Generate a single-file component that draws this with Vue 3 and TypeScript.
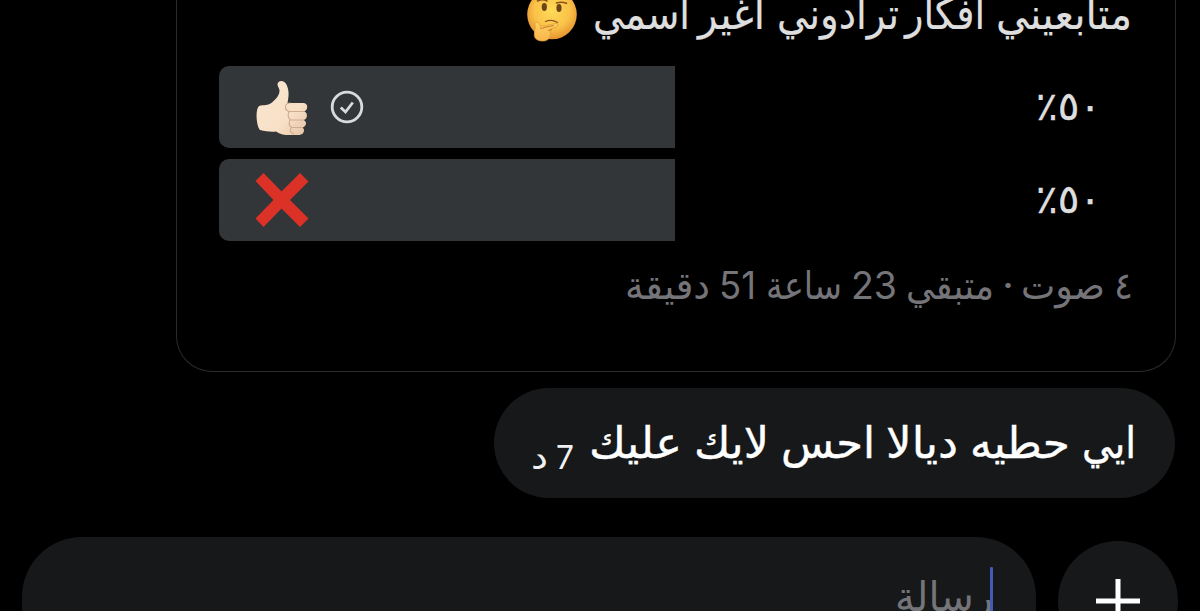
<script setup lang="ts">
interface Word { t: string; x: number; w: number; small?: boolean }

// x is the right edge of the word, w its width
const question: Word[] = [
  { t: 'متابعيني', x: 1132, w: 136 },
  { t: 'أفكار', x: 985, w: 80 },
  { t: 'ترادوني', x: 899, w: 122 },
  { t: 'أغير', x: 765, w: 67 },
  { t: 'اسمي', x: 690, w: 97 },
]
const votes: Word[] = [
  { t: '٤', x: 1133, w: 19 },
  { t: 'صوت', x: 1105, w: 84 },
  { t: '·', x: 1014, w: 12 },
  { t: 'متبقي', x: 994, w: 88 },
  { t: '23', x: 897, w: 46 },
  { t: 'ساعة', x: 842, w: 76 },
  { t: '51', x: 756, w: 37 },
  { t: 'دقيقة', x: 710, w: 85 },
]
const message: Word[] = [
  { t: 'ايي', x: 1136, w: 54 },
  { t: 'حطيه', x: 1070, w: 100 },
  { t: 'ديالا', x: 958, w: 72 },
  { t: 'احس', x: 875, w: 94 },
  { t: 'لايك', x: 769, w: 75 },
  { t: 'عليك', x: 682, w: 93 },
  { t: '7', x: 574, w: 18, small: true },
  { t: 'د', x: 548, w: 17, small: true },
]
const options = [{ id: 'yes', chosen: true }, { id: 'no', chosen: false }]
</script>

<template>
  <main class="screen" dir="rtl">
    <section class="card">
      <svg class="question" viewBox="177 0 998 66">
        <text v-for="w in question" :key="w.t" :x="w.x" y="29" :textLength="w.w" lengthAdjust="spacingAndGlyphs">{{ w.t }}</text>
        <defs>
          <radialGradient id="face" cx=".5" cy=".42" r=".6">
            <stop offset="0" stop-color="#ffdb58" /><stop offset=".6" stop-color="#fac248" /><stop offset="1" stop-color="#e38f2c" />
          </radialGradient>
          <linearGradient id="hand" x1="0" y1="0" x2="0" y2="1">
            <stop offset="0" stop-color="#ffd061" /><stop offset="1" stop-color="#f8b54c" />
          </linearGradient>
        </defs>
        <circle cx="552" cy="14.500" r="24.800" fill="url(#face)" />
        <ellipse cx="544.300" cy="7" rx="2.600" ry="3.900" fill="#6b4518" />
        <ellipse cx="559" cy="8" rx="2.600" ry="3.900" fill="#6b4518" />
        <path d="M537.500 1q5-2.500 9.500 0M556.500 3q5-1.500 10 .3" fill="none" stroke="#8a5317" stroke-width="1.600" stroke-linecap="round" />
        <path d="M545.500 21.500q6-2.500 12 1" fill="none" stroke="#8a5522" stroke-width="1.300" stroke-linecap="round" />
        <path d="M537 22c-2 0-2.500 2-1.700 5l-.8 5c-1 5 1 8.500 7 9 6 .5 9-3 9-6.500l-.3-5 6-2.500c2.500-1.500 1.500-4-.8-3.500l-10.500 2.500-4.500 0c-1-1.500-1-4-3.400-4z" fill="url(#hand)" stroke="#dd9836" stroke-width=".7" />
        <path d="M540 28q3 1 4-.5l10-2M548 30.500l4-1" stroke="#c87d26" fill="none" />
      </svg>

      <div class="poll">
        <div v-for="o in options" :key="o.id" class="row">
          <svg class="percent" viewBox="1030 66 76 82">
            <text x="1101" y="119.500" textLength="65" lengthAdjust="spacingAndGlyphs">٥٠٪</text>
          </svg>
          <div class="bar" dir="ltr">
            <svg v-if="o.chosen" class="picto" viewBox="0 0 56 58">
              <defs>
                <linearGradient id="skin" x1="0" y1="0" x2="1" y2="1">
                  <stop offset="0" stop-color="#f8e6d0" /><stop offset=".65" stop-color="#f8e0c7" /><stop offset="1" stop-color="#e4c2a2" />
                </linearGradient>
              </defs>
              <path d="M6 28C11 26.500 15 28 19 24.500c4.500-4 7.500-7.500 7.500-12 0-2-2-4-2-6 0-4.500 7-5 9.200.5 2.500 6 2.300 11 .8 18H50c5.500 0 5.500 7 1 8.500 4 1 4 7.500-.5 8.500 4 1.500 3 6.500-1 7.500 3 2 1.500 7-3 7.500H38c-8 .5-11-1-15-3.500-5 .5-10 0-16-1.500C3.500 48 2 32 6 28z" fill="url(#skin)" />
              <path d="M51.500 33.500H36.500q-4.500-1-4-5 .5-3.500 5-3.500M50.500 42H38q-4.500-2.500-2-8.500M49 49.500H39q-4.500-2.500-2-7.500M41 56q-6-2.500-2.500-6.500" fill="none" stroke="#cfac90" stroke-width="1.100" />
            </svg>
            <svg v-else class="picto" viewBox="0 0 56 58">
              <path d="M2.500 10L10.500 2 28.500 20.500 47 2l8.500 8.500L37 29 55.500 47.500 47 56 28.500 37.500 10.500 56 2.500 47.500 20.500 29z" fill="#dc3126" />
            </svg>
            <svg v-if="o.chosen" class="check" viewBox="0 0 34 34">
              <circle cx="17" cy="17" r="14.800" />
              <path d="M10.800 17.500l4.700 4.500 7.300-9.500" />
            </svg>
          </div>
        </div>
      </div>

      <svg class="votes" viewBox="177 241 998 130">
        <text v-for="w in votes" :key="w.t" :x="w.x" y="298.500" :textLength="w.w" lengthAdjust="spacingAndGlyphs">{{ w.t }}</text>
      </svg>
    </section>

    <section class="bubble">
      <svg viewBox="494 388 681 110">
        <text v-for="w in message" :key="w.t" :x="w.x" :y="w.small ? 468.500 : 458" :class="{ small: w.small }" :textLength="w.w" lengthAdjust="spacingAndGlyphs">{{ w.t }}</text>
      </svg>
    </section>

    <footer class="composer">
      <button class="add" aria-label="+">
        <svg viewBox="0 0 44 44"><path d="M22 0v44M0 22h44" /></svg>
      </button>
      <div class="field">
        <i class="caret"></i>
        <svg viewBox="890 560 104 70"><text x="993" y="611" textLength="98" lengthAdjust="spacingAndGlyphs">رسالة</text></svg>
      </div>
    </footer>
  </main>
</template>

<style>
html, body { margin: 0; background: #000; overflow: hidden; }
</style>

<style scoped>
.screen { width: 1200px; height: 611px; overflow: hidden; background: #000; box-sizing: border-box; padding: 0 24px 0 22px; font-family: Inter, "DejaVu Sans", sans-serif; }
svg { display: block; flex: none; overflow: visible; }
text { direction: rtl; text-anchor: start; font-family: Inter, "DejaVu Sans", sans-serif; stroke-width: 0.2; }
.card { width: 1000px; height: 372px; box-sizing: border-box; border: 1px solid #2b2c2e; border-top: 0; border-radius: 0 0 36px 36px; }
.question { width: 998px; height: 66px; fill: #dedede; font-size: 43px; }
.question text { stroke: #dedede; }
.poll { display: flex; flex-direction: column; gap: 11px; }
.row { height: 82px; display: flex; justify-content: space-between; padding: 0 69px 0 42px; }
.percent { width: 76px; height: 82px; fill: #dedede; font-size: 40px; }
.percent text { stroke: #dedede; stroke-width: 0.4; }
.bar { width: 456px; height: 82px; box-sizing: border-box; padding-left: 34px; display: flex; align-items: center; gap: 21px; background: #333639; border-radius: 10px 0 0 10px; }
.picto { width: 56px; height: 58px; }
.check { width: 34px; height: 34px; fill: none; stroke: #d9dadd; stroke-width: 2.800; }
.votes { width: 998px; height: 130px; fill: #747479; font-size: 38px; }
.bubble { width: 681px; height: 110px; margin: 16px 1px 0 0; border-radius: 55px; background: #16181a; }
.bubble svg { width: 681px; height: 110px; fill: #fff; font-size: 43px; }
.bubble text { stroke: #fff; stroke-width: 0.4; }
.bubble .small { font-size: 33px; fill: #f0f0f1; stroke: none; }
.composer { display: flex; gap: 22px; margin: 39px -2px 0 0; }
.add { width: 120px; height: 120px; margin: 4px 0 0; padding: 0; border: 0; border-radius: 50%; background: #16181a; display: flex; align-items: center; justify-content: center; }
.add svg { width: 44px; height: 44px; stroke: #fff; stroke-width: 5; }
.field { flex: 1; height: 130px; box-sizing: border-box; padding: 30px 43px 0 0; border-radius: 60px; background: #16181a; display: flex; }
.caret { width: 3px; height: 60px; background: #4459b8; border-radius: 1px; flex: none; z-index: 1; }
.field svg { width: 104px; height: 70px; margin: -7px -4px 0 0; fill: #747479; font-size: 41px; }
</style>
